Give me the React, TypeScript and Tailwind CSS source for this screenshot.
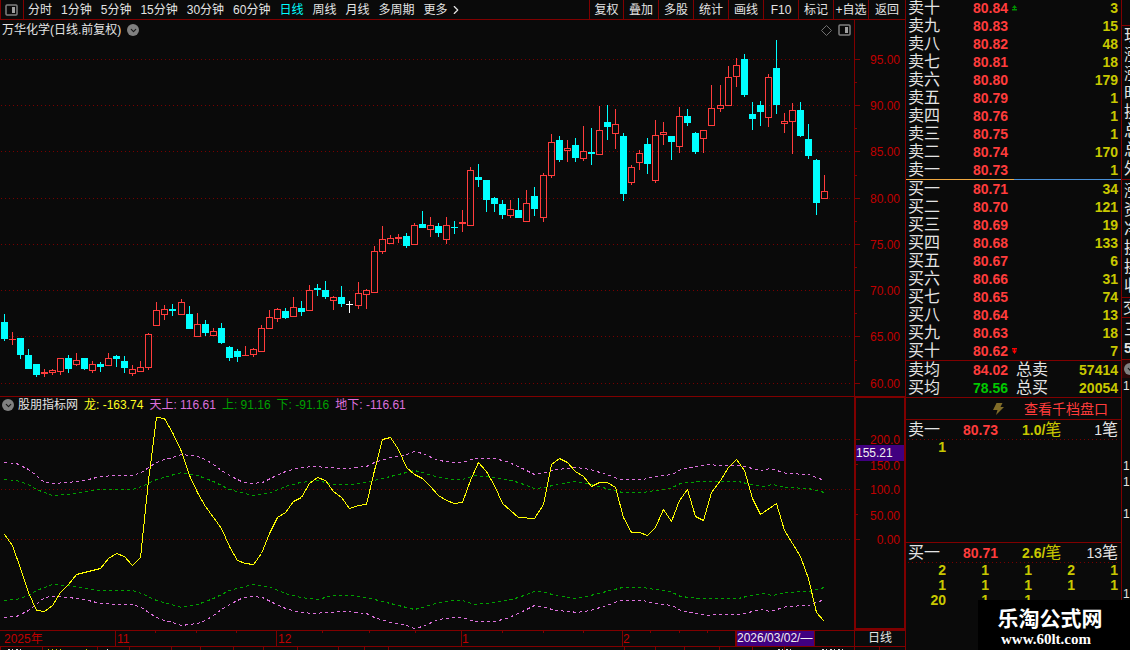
import { ChevronDown, ChevronRight } from 'lucide-react'

type Kind = 'up' | 'down' | 'flat'
// x, high, body top, body bottom, low, kind
type Candle = [number, number, number, number, number, Kind]
type Point = [number, number]

const periods = ['分时', '1分钟', '5分钟', '15分钟', '30分钟', '60分钟', '日线', '周线', '月线', '多周期', '更多']
const tools = ['复权', '叠加', '多股', '统计', '画线', 'F10', '标记', '+自选', '返回']

const candles: Candle[] = [
  [4, 314, 322, 339, 341, 'down'],
  [12, 332, 339, 340, 345, 'up'],
  [20, 338, 338, 355, 359, 'down'],
  [28, 349, 355, 369, 369, 'down'],
  [36, 364, 364, 375, 377, 'down'],
  [44, 369, 372, 374, 377, 'up'],
  [52, 369, 370, 373, 375, 'up'],
  [60, 358, 358, 372, 375, 'up'],
  [68, 355, 358, 369, 373, 'down'],
  [76, 353, 360, 365, 366, 'up'],
  [84, 358, 358, 369, 370, 'down'],
  [92, 361, 364, 371, 373, 'up'],
  [100, 362, 364, 367, 372, 'down'],
  [108, 353, 358, 366, 366, 'up'],
  [116, 355, 356, 359, 367, 'down'],
  [124, 356, 361, 368, 373, 'down'],
  [132, 365, 369, 374, 376, 'up'],
  [140, 361, 367, 372, 372, 'up'],
  [148, 333, 334, 368, 370, 'up'],
  [156, 302, 310, 326, 326, 'up'],
  [164, 305, 309, 315, 320, 'up'],
  [172, 304, 309, 311, 316, 'down'],
  [181, 299, 302, 315, 315, 'up'],
  [189, 306, 314, 329, 329, 'down'],
  [197, 313, 324, 337, 337, 'up'],
  [205, 320, 324, 333, 336, 'down'],
  [213, 328, 331, 336, 336, 'up'],
  [221, 323, 328, 343, 344, 'down'],
  [229, 346, 347, 358, 361, 'down'],
  [237, 349, 351, 357, 362, 'down'],
  [245, 346, 355, 356, 356, 'up'],
  [253, 348, 349, 355, 357, 'up'],
  [261, 325, 328, 352, 352, 'up'],
  [269, 310, 317, 329, 329, 'up'],
  [277, 308, 309, 319, 322, 'up'],
  [285, 308, 311, 318, 319, 'down'],
  [293, 297, 307, 317, 317, 'up'],
  [301, 301, 308, 312, 316, 'down'],
  [309, 285, 290, 311, 311, 'up'],
  [317, 284, 288, 290, 296, 'down'],
  [325, 281, 290, 297, 299, 'down'],
  [333, 296, 297, 301, 310, 'up'],
  [341, 286, 297, 304, 307, 'down'],
  [349, 301, 304, 305, 313, 'flat'],
  [358, 282, 293, 306, 309, 'up'],
  [366, 289, 290, 295, 309, 'up'],
  [374, 246, 251, 293, 293, 'up'],
  [382, 226, 239, 252, 254, 'up'],
  [390, 235, 238, 244, 244, 'up'],
  [398, 234, 237, 239, 243, 'up'],
  [406, 233, 236, 246, 248, 'down'],
  [414, 223, 225, 245, 245, 'up'],
  [422, 211, 224, 228, 228, 'down'],
  [430, 217, 225, 230, 237, 'up'],
  [438, 223, 226, 233, 237, 'down'],
  [446, 217, 225, 240, 244, 'up'],
  [454, 221, 227, 228, 234, 'down'],
  [462, 210, 222, 224, 232, 'up'],
  [470, 167, 170, 226, 226, 'up'],
  [478, 164, 177, 180, 187, 'down'],
  [486, 180, 180, 200, 212, 'down'],
  [494, 197, 198, 204, 212, 'down'],
  [502, 200, 204, 215, 219, 'down'],
  [510, 200, 209, 216, 218, 'up'],
  [518, 198, 210, 218, 218, 'down'],
  [526, 190, 203, 222, 222, 'up'],
  [534, 187, 196, 209, 216, 'down'],
  [543, 173, 175, 218, 222, 'up'],
  [551, 134, 142, 176, 178, 'up'],
  [559, 136, 140, 160, 162, 'down'],
  [567, 140, 148, 151, 162, 'up'],
  [575, 138, 145, 158, 162, 'down'],
  [583, 126, 151, 159, 161, 'up'],
  [591, 128, 152, 154, 165, 'down'],
  [599, 106, 130, 155, 155, 'up'],
  [607, 105, 122, 127, 140, 'down'],
  [615, 109, 124, 134, 149, 'up'],
  [623, 133, 136, 194, 201, 'down'],
  [631, 165, 167, 183, 185, 'up'],
  [639, 150, 153, 163, 170, 'up'],
  [647, 138, 144, 164, 174, 'down'],
  [655, 120, 135, 181, 183, 'up'],
  [663, 122, 132, 135, 145, 'up'],
  [671, 136, 136, 142, 160, 'down'],
  [679, 107, 116, 147, 153, 'up'],
  [687, 109, 116, 123, 126, 'down'],
  [695, 132, 133, 152, 154, 'down'],
  [703, 130, 130, 139, 153, 'up'],
  [711, 85, 108, 126, 126, 'up'],
  [720, 85, 105, 109, 112, 'up'],
  [728, 66, 77, 106, 106, 'up'],
  [736, 58, 65, 77, 87, 'up'],
  [744, 54, 59, 95, 97, 'down'],
  [752, 102, 114, 119, 130, 'down'],
  [760, 101, 105, 112, 126, 'down'],
  [768, 74, 77, 118, 127, 'up'],
  [776, 40, 68, 105, 114, 'down'],
  [784, 113, 121, 124, 133, 'up'],
  [792, 103, 110, 122, 154, 'up'],
  [800, 102, 110, 136, 137, 'down'],
  [808, 124, 139, 156, 159, 'down'],
  [816, 159, 160, 203, 215, 'down'],
  [824, 175, 191, 199, 199, 'up'],
]

const priceScale: [string, number][] = [
  ['95.00', 59], ['90.00', 105], ['85.00', 151], ['80.00', 198],
  ['75.00', 244], ['70.00', 290], ['65.00', 336], ['60.00', 383],
]
const priceHalfTicks = [82, 128, 175, 221, 267, 313, 360]

const dragon: Point[] = [
  [4, 534], [12, 545], [20, 568], [28, 592], [36, 610], [44, 611], [52, 605], [60, 592], [68, 584], [76, 574],
  [84, 572], [92, 570], [100, 568], [108, 558], [116, 553], [124, 556], [132, 565], [140, 557], [148, 480],
  [156, 417], [164, 418], [172, 432], [181, 451], [189, 475], [197, 492], [205, 506], [213, 517], [221, 528],
  [229, 546], [237, 560], [245, 563], [253, 564], [261, 553], [269, 533], [277, 517], [285, 512], [293, 501],
  [301, 497], [309, 483], [317, 477], [325, 480], [333, 491], [341, 497], [349, 508], [358, 505], [366, 504],
  [374, 470], [382, 439], [390, 437], [398, 449], [406, 467], [414, 474], [422, 478], [430, 486], [438, 495],
  [446, 500], [454, 503], [462, 502], [470, 480], [478, 462], [486, 471], [494, 485], [502, 503], [510, 510],
  [518, 517], [534, 518], [543, 504], [551, 464], [559, 458], [567, 462], [575, 471], [583, 476], [591, 486],
  [599, 482], [607, 482], [615, 487], [623, 517], [631, 532], [639, 532], [647, 535], [655, 527], [663, 509],
  [671, 521], [679, 500], [687, 489], [695, 516], [703, 520], [711, 492], [720, 480], [728, 467], [736, 459],
  [744, 470], [752, 498], [760, 514], [776, 503], [784, 530], [792, 543], [800, 556], [808, 578], [816, 612],
  [824, 621],
]

const outerBand: Point[] = [
  [4, 462], [16, 463], [28, 469], [36, 475], [44, 482], [52, 483], [68, 482], [84, 480], [100, 476], [116, 475],
  [132, 475], [141, 472], [148, 467], [156, 462], [164, 459], [172, 457], [181, 454], [197, 456], [205, 459],
  [213, 464], [221, 470], [229, 475], [241, 481], [252, 483], [262, 482], [272, 477], [285, 471], [300, 467],
  [315, 466], [325, 467], [345, 468], [366, 466], [374, 462], [390, 457], [406, 454], [414, 451], [422, 453],
  [438, 460], [454, 462], [462, 462], [474, 458], [494, 458], [506, 461], [518, 466], [534, 474], [546, 472],
  [554, 469], [570, 468], [576, 467], [590, 469], [606, 474], [620, 479], [642, 479], [655, 476], [672, 474],
  [680, 469], [695, 466], [706, 464], [720, 465], [740, 465], [760, 470], [770, 468], [786, 473], [808, 474],
  [824, 480],
]

const innerBand: Point[] = [
  [4, 479], [16, 480], [28, 484], [36, 489], [52, 495], [68, 494], [84, 491], [100, 489], [132, 489], [141, 486],
  [156, 479], [181, 472], [197, 475], [213, 481], [229, 489], [252, 495], [270, 492], [285, 486], [300, 482],
  [317, 480], [333, 484], [350, 484], [366, 482], [390, 476], [414, 470], [422, 472], [438, 477], [454, 479],
  [462, 479], [474, 475], [494, 477], [506, 479], [518, 482], [534, 488], [546, 487], [554, 484], [576, 481],
  [590, 484], [606, 488], [622, 492], [642, 492], [655, 490], [670, 488], [680, 483], [700, 481], [738, 481],
  [750, 484], [762, 486], [772, 484], [786, 487], [808, 488], [824, 492],
]

// the lower bands mirror the upper ones around the zero line
const mirror = (line: Point[]): Point[] => line.map(([x, y]) => [x, 1079 - y])
const toPoints = (line: Point[]) => line.map(([x, y]) => `${x + 0.5},${y + 0.5}`).join(' ')

const sells: [string, string, string][] = [
  ['卖十', '80.84', '3'], ['卖九', '80.83', '15'], ['卖八', '80.82', '48'], ['卖七', '80.81', '18'],
  ['卖六', '80.80', '179'], ['卖五', '80.79', '1'], ['卖四', '80.76', '1'], ['卖三', '80.75', '1'],
  ['卖二', '80.74', '170'], ['卖一', '80.73', '1'],
]
const buys: [string, string, string][] = [
  ['买一', '80.71', '34'], ['买二', '80.70', '121'], ['买三', '80.69', '19'], ['买四', '80.68', '133'],
  ['买五', '80.67', '6'], ['买六', '80.66', '31'], ['买七', '80.65', '74'], ['买八', '80.64', '13'],
  ['买九', '80.63', '18'], ['买十', '80.62', '7'],
]

const buyQueue = ['2', '1', '1', '2', '1', '1', '1', '1', '1', '1', '20', '1', '1']

const SplitIcon = () => (
  <svg width="14" height="12" viewBox="0 0 14 12" aria-hidden="true">
    <rect x="1" y="1" width="11" height="10" rx="1" fill="none" stroke="#808080" strokeWidth="1.5" />
    <rect x="7" y="3" width="3" height="6" fill="#a0a0a0" />
  </svg>
)

const RoundToggle = ({ label }: { label: string }) => (
  <button aria-label={label} className="flex h-3 w-3 shrink-0 items-center justify-center rounded-full bg-[#808080] text-[#181818]">
    <ChevronDown size={9} strokeWidth={3} />
  </button>
)

const Toolbar = () => (
  <header className="flex h-5 items-stretch border-b border-l border-[#800000]">
    <button aria-label="侧栏" className="flex w-[23px] items-center justify-center border-r border-[#800000]">
      <SplitIcon />
    </button>
    <nav className="flex flex-1 items-center gap-[9px] pl-1 whitespace-nowrap">
      {periods.map((p) => (
        <button key={p} className={p === '日线' ? 'text-[#00ffff]' : 'text-[#e4e4e4]'}>
          {p}
        </button>
      ))}
      <ChevronRight size={14} strokeWidth={2} className="-ml-2" />
    </nav>
    <div className="flex">
      {tools.map((t) => (
        <button key={t} className="w-[35px] border-l border-[#800000] whitespace-nowrap first:w-[34px] last:w-[37px]">
          {t}
        </button>
      ))}
    </div>
  </header>
)

const Grid = ({ rows }: { rows: number[] }) => (
  <g stroke="#780000" strokeDasharray="1 3">
    {rows.map((y) => (
      <line key={y} x1="1" x2="852" y1={y + 0.5} y2={y + 0.5} />
    ))}
  </g>
)

const CandleMark = ({ data }: { data: Candle }) => {
  const [x, high, top, bottom, low, kind] = data
  const color = kind === 'up' ? '#ff3c3c' : kind === 'down' ? '#00ffff' : '#ffffff'
  const hollow = kind === 'up' && bottom - top > 2
  return (
    <g fill={color}>
      <rect x={x} y={high} width="1" height={top - high} />
      <rect x={x} y={bottom} width="1" height={low - bottom} />
      {hollow ? (
        <rect x={x - 2.5} y={top + 0.5} width="6" height={bottom - top - 1} fill="none" stroke={color} />
      ) : (
        <rect x={x - 3} y={top} width="7" height={bottom - top} />
      )}
    </g>
  )
}

const PriceChart = () => (
  <section className="flex h-[376px]">
    <div className="min-w-0 flex-1 overflow-hidden">
      <div className="flex h-5 items-center pl-[2px]">
        <h1 className="mr-[6px]">万华化学(日线.前复权)</h1>
        <RoundToggle label="切换复权" />
        <div className="mr-[2px] ml-auto flex items-center gap-[6px]">
          <svg width="11" height="11" viewBox="0 0 11 11" aria-hidden="true">
            <path d="M5.5 .5l5 5-5 5-5-5z" fill="none" stroke="#707070" />
          </svg>
          <SplitIcon />
        </div>
      </div>
      <svg width="854" height="356" viewBox="0 40 854 356" shapeRendering="crispEdges" className="block max-w-none">
        <Grid rows={priceScale.map(([, y]) => y)} />
        {candles.map((c) => (
          <CandleMark key={c[0]} data={c} />
        ))}
      </svg>
    </div>
    <div className="w-[51px] border-l border-[#800000]">
      <svg width="50" height="376" viewBox="0 20 50 376" className="block">
        {priceScale.map(([label, y]) => (
          <g key={label}>
            <rect x="0" y={y} width="5" height="1" fill="#800000" />
            <text x="45" y={y + 5} textAnchor="end" fill="#c00000">{label}</text>
          </g>
        ))}
        {priceHalfTicks.map((y) => (
          <rect key={y} x="0" y={y} width="2" height="1" fill="#800000" />
        ))}
      </svg>
    </div>
  </section>
)

const IndicatorChart = () => (
  <section className="flex h-[234px]">
    <div className="min-w-0 flex-1 overflow-hidden border-t border-[#800000]">
      <div className="flex h-4 items-center gap-[6px] pl-[2px] whitespace-nowrap">
        <RoundToggle label="指标菜单" />
        <span className="-ml-[2px]">股朋指标网</span>
        <span className="text-[#ffff20]">龙: -163.74</span>
        <span className="text-[#dc70dc]">天上: 116.61</span>
        <span className="text-[#00a000]">上: 91.16</span>
        <span className="text-[#00a000]">下: -91.16</span>
        <span className="text-[#dc70dc]">地下: -116.61</span>
      </div>
      <svg width="854" height="217" viewBox="0 413 854 217" shapeRendering="crispEdges" className="block max-w-none">
        <Grid rows={[439, 489, 539]} />
        <g fill="none" strokeDasharray="3 3">
          <polyline points={toPoints(outerBand)} stroke="#dc70dc" />
          <polyline points={toPoints(innerBand)} stroke="#00a000" />
          <polyline points={toPoints(mirror(innerBand))} stroke="#00a000" />
          <polyline points={toPoints(mirror(outerBand))} stroke="#dc70dc" />
        </g>
        <polyline points={toPoints(dragon)} fill="none" stroke="#ffff00" />
      </svg>
    </div>
    <div className="w-[51px] border-2 border-r border-[#800000]">
      <svg width="48" height="230" viewBox="856 398 48 230" className="block">
        <g fill="#c00000" textAnchor="end">
          <text x="900" y="444">200.0</text>
          <text x="900" y="470">150.0</text>
          <text x="900" y="494">100.0</text>
          <text x="900" y="520">50.00</text>
          <text x="900" y="544">0.00</text>
        </g>
        <g fill="#800000">
          <rect x="856" y="439" width="4" height="1" />
          <rect x="856" y="464" width="2" height="1" />
          <rect x="856" y="489" width="4" height="1" />
          <rect x="856" y="514" width="2" height="1" />
          <rect x="856" y="539" width="4" height="1" />
        </g>
        <rect x="856" y="445" width="48" height="16" fill="#400080" />
        <text x="856" y="457" fill="#f0f0f0">155.21</text>
      </svg>
    </div>
  </section>
)

const TimeAxis = () => (
  <div className="flex h-4 border-t border-[#800000]">
    <div className="min-w-0 flex-1 overflow-hidden">
      <svg width="854" height="15" viewBox="0 631 854 15" className="block max-w-none">
        <g fill="#800000">
          {[115, 276, 461, 622].map((x) => (
            <rect key={x} x={x} y="631" width="1" height="15" />
          ))}
          {[155, 196, 236, 322, 369, 415, 502, 543, 583, 650, 679, 707].map((x) => (
            <rect key={x} x={x} y="631" width="1" height="2" />
          ))}
        </g>
        <g fill="#c00000">
          <text x="4" y="643">2025年</text>
          <text x="117" y="643">11</text>
          <text x="278" y="643">12</text>
          <text x="462" y="643">1</text>
          <text x="623" y="643">2</text>
        </g>
        <rect x="735" y="631" width="80" height="15" fill="#800000" />
        <rect x="737" y="631" width="77" height="15" fill="#400080" />
        <text x="737" y="642" fill="#f0f0f0">2026/03/02/—</text>
      </svg>
    </div>
    <button className="w-[51px] border-l border-[#800000] leading-[15px]">日线</button>
  </div>
)

// top edge of the index ticker, cut off by the window
const Ticker = () => (
  <footer className="h-1 overflow-hidden border-t border-[#800000]">
    <svg width="905" height="3" viewBox="0 647 905 3" shapeRendering="crispEdges" className="block max-w-none">
      <g fill="#800000">
        {[0, 42, 97, 129, 171, 200, 233, 263, 297, 338, 364, 388, 624, 655, 684, 719, 752, 784, 854, 879].map((x) => (
          <rect key={x} x={x} y="647" width="1" height="3" />
        ))}
      </g>
      <path d="M8 649.5h14M107 649.5h1M778 649.5h14M822 649.5h24" stroke="#e0e0e0" strokeDasharray="2 2 1 3" />
      <path d="M48 649.5h14M86 649.5h1" stroke="#c8c800" strokeDasharray="1 3" />
    </svg>
  </footer>
)

const Ladder = ({ rows, marked, dir }: { rows: [string, string, string][]; marked: string; dir: 'up' | 'down' }) => (
  <table className="w-full table-fixed border-collapse">
    <tbody>
      {rows.map(([name, price, volume]) => (
        <tr key={name} className="h-[18px] leading-[18px]">
          <th className="w-[67px] p-0 pl-[2px] text-left text-base leading-[18px] font-normal">{name}</th>
          <td className="p-0 text-sm leading-[18px] font-bold text-[#ff3c3c]">
            <span className="flex items-center gap-1">
              {price}
              {name === marked && (
                <svg width="5" height="7" viewBox="0 0 5 7" aria-hidden="true">
                  {dir === 'up' ? (
                    <path d="M2.5 0L5 3H3v1h2v1.500H0V4h2V3H0z" fill="#009000" />
                  ) : (
                    <path d="M0 0h5v1.500H3v1h2L2.500 6 0 2.500h2v-1H0z" fill="#ff0000" />
                  )}
                </svg>
              )}
            </span>
          </td>
          <td className="w-[60px] p-0 pr-[3px] text-right text-sm leading-[18px] font-bold text-[#c8c800]">{volume}</td>
        </tr>
      ))}
    </tbody>
  </table>
)

const Average = ({ name, price, tone, total, amount }: { name: string; price: string; tone: string; total: string; amount: string }) => (
  <div className="flex h-[18px] items-center pr-[3px] pl-[2px] text-sm font-bold">
    <span className="w-[65px] text-base leading-[18px] font-normal">{name}</span>
    <span className={`w-[43px] ${tone}`}>{price}</span>
    <span className="text-base leading-[18px] font-normal">{total}</span>
    <span className="ml-auto text-[#c8c800]">{amount}</span>
  </div>
)

const QueueHead = ({ name, price, mean, count }: { name: string; price: string; mean: string; count: string }) => (
  <>
    <div className="flex h-[19px] shrink-0 items-center pr-[3px] pl-[2px] text-sm font-bold">
      <span className="w-[55px] text-base leading-[18px] font-normal">{name}</span>
      <span className="w-[59px] text-[#ff3c3c]">{price}</span>
      <span className="flex items-center text-[#c8c800]">
        {mean}
        <span className="text-base leading-[18px] font-normal">笔</span>
      </span>
      <span className="ml-auto flex items-center font-medium">
        {count}
        <span className="text-base leading-[18px] font-normal">笔</span>
      </span>
    </div>
    <div className="mx-[2px] h-px shrink-0 bg-[repeating-linear-gradient(90deg,#780000_0_1px,transparent_1px_4px)]" />
  </>
)

const Queue = ({ items }: { items: string[] }) => (
  <div className="grid grid-cols-5 text-sm leading-[15px] font-bold text-[#c8c800]">
    {items.map((n, i) => (
      <span key={i} className="pr-[3px] text-right">{n}</span>
    ))}
  </div>
)

const OrderBook = () => (
  <aside className="flex w-[216px] shrink-0 flex-col border-l border-[#800000]">
    <div className="-mt-px">
      <Ladder rows={sells} marked="卖十" dir="up" />
    </div>
    <div className="flex h-px">
      <div className="flex-1 bg-[#f0a840]" />
      <div className="flex-1 bg-[#4890d8]" />
    </div>
    <Ladder rows={buys} marked="买十" dir="down" />
    <div className="border-y border-[#800000]">
      <Average name="卖均" price="84.02" tone="text-[#ff3c3c]" total="总卖" amount="57414" />
      <Average name="买均" price="78.56" tone="text-[#00c800]" total="总买" amount="20054" />
    </div>
    <button className="flex h-[22px] shrink-0 items-center justify-end gap-[19px] border-b border-[#800000] pr-[13px] text-sm text-[#ff3c3c]">
      <svg width="12" height="12" viewBox="0 0 12 12" aria-hidden="true">
        <path d="M3.500 0h6L7.500 4H11L3 12l1.500-5H0z" fill="#806c28" />
      </svg>
      查看千档盘口
    </button>
    <div className="h-[123px] shrink-0 border-b border-[#800000]">
      <QueueHead name="卖一" price="80.73" mean="1.0/" count="1" />
      <Queue items={['1']} />
    </div>
    <QueueHead name="买一" price="80.71" mean="2.6/" count="13" />
    <Queue items={buyQueue} />
  </aside>
)

// next panel, only its first few pixels fit in the window
const EdgePanel = () => (
  <aside className="flex w-[9px] shrink-0 flex-col overflow-hidden border-l border-[#800000] text-base leading-[19px]">
    <div className="h-[26px] shrink-0 border-b border-[#800000]" />
    <div className="h-[154px] shrink-0 overflow-hidden border-b border-[#800000] pl-[2px]">
      {['现', '涨', '涨', '时', '换', '总', '总', '外'].map((c, i) => (
        <div key={i} className="w-4">{c}</div>
      ))}
    </div>
    <div className="h-[118px] shrink-0 overflow-hidden border-b border-[#800000] pt-px pl-[2px]">
      {['涨', '资', '净', '换', '换', '收'].map((c, i) => (
        <div key={i} className="w-4">{c}</div>
      ))}
    </div>
    <div className="h-5 shrink-0 overflow-hidden border-b border-[#800000] pl-px">
      <div className="w-4">交</div>
    </div>
    <div className="h-[42px] shrink-0 overflow-hidden border-b border-[#800000] pt-[2px] pl-[2px]">
      <div className="w-4">三</div>
      <div className="text-sm leading-[18px] font-bold">5</div>
    </div>
    <div className="flex h-[18px] shrink-0 items-center bg-[#280808] pl-[2px]">
      <RoundToggle label="展开" />
    </div>
    <div className="pl-px text-xs leading-4">
      <div>1</div>
      <div className="mt-16">1</div>
      <div>1</div>
      <div className="mt-4">1</div>
      <div className="mt-16">1</div>
    </div>
  </aside>
)

const App = () => (
  <div className="relative flex h-screen overflow-hidden bg-[#0a0a0a] font-['Liberation_Sans','Noto_Sans_CJK_SC',sans-serif] text-xs text-[#e4e4e4]">
    <main className="flex min-w-0 flex-1 flex-col">
      <Toolbar />
      <PriceChart />
      <IndicatorChart />
      <TimeAxis />
      <Ticker />
    </main>
    <OrderBook />
    <EdgePanel />
    <a href="#home" className="absolute right-0 bottom-0 flex h-[50px] w-[152px] flex-col items-center bg-black pt-[9px] pr-2 text-white">
      <span className="text-[21px] leading-5 font-bold">乐淘公式网</span>
      <span className="pr-2 font-['Liberation_Serif',serif] text-[15px] leading-5 font-bold">www.60lt.com</span>
    </a>
  </div>
)

export default App
